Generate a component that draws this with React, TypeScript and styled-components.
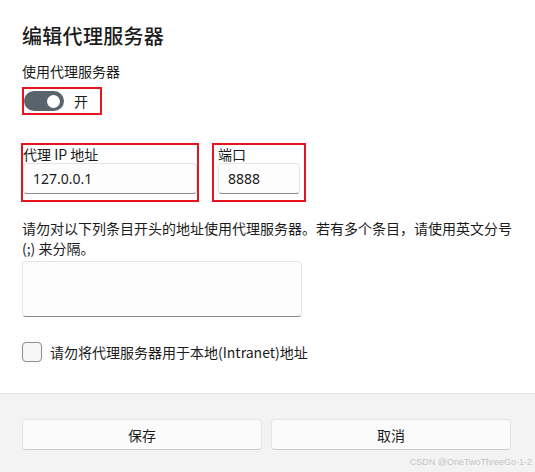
import styled, { createGlobalStyle } from 'styled-components'

const GlobalStyle = createGlobalStyle`
  html, body {
    margin: 0;
    padding: 0;
    background: #ffffff;
  }
  body {
    font-family: "Noto Sans CJK SC", "Noto Sans", sans-serif;
    color: #1b1b1b;
  }
  * {
    box-sizing: border-box;
  }
`

export default function App() {
  return (
    <>
      <GlobalStyle />
      <Dialog>
        <Content>
          <Title>编辑代理服务器</Title>
          <Label>使用代理服务器</Label>
          <ToggleMark>
            <ToggleRow>
              <Switch>
                <Knob />
              </Switch>
              <ToggleText>开</ToggleText>
            </ToggleRow>
          </ToggleMark>

          <FieldRow>
            <Marked>
              <Field width={174}>
                <FieldLabel>代理 IP 地址</FieldLabel>
                <Input defaultValue="127.0.0.1" />
              </Field>
            </Marked>
            <Marked>
              <Field width={90} inset={4}>
                <FieldLabel>端口</FieldLabel>
                <Input defaultValue="8888" />
              </Field>
            </Marked>
          </FieldRow>

          <Description>
            请勿对以下列条目开头的地址使用代理服务器。若有多个条目，请使用英文分号
            <br />
            (;) 来分隔。
          </Description>
          <TextArea />

          <CheckRow>
            <CheckBox />
            <CheckLabel>请勿将代理服务器用于本地(Intranet)地址</CheckLabel>
          </CheckRow>
        </Content>

        <Footer>
          <Buttons>
            <Button>保存</Button>
            <Button>取消</Button>
          </Buttons>
          <Watermark>CSDN @OneTwoThreeGo-1-2</Watermark>
        </Footer>
      </Dialog>
    </>
  )
}

const Dialog = styled.div`
  width: 535px;
  height: 472px;
  display: flex;
  flex-direction: column;
  overflow: hidden;
`

const Content = styled.div`
  flex: 1;
  display: flex;
  flex-direction: column;
  align-items: flex-start;
  padding: 22px 22px 0 22px;
`

const Title = styled.h1`
  margin: 0;
  font-size: 20px;
  line-height: 28px;
  font-weight: 500;
  letter-spacing: 0.3px;
`

const Label = styled.div`
  margin-top: 11px;
  font-size: 14px;
  line-height: 20px;
`

const Marked = styled.div`
  border: 2px solid #e6141f;
  display: inline-flex;
`

const ToggleMark = styled(Marked)`
  margin-top: 6px;
`

const ToggleRow = styled.div`
  display: flex;
  align-items: center;
  gap: 10px;
  height: 24px;
  padding: 0 12px 0 0;
`

const Switch = styled.div`
  width: 40px;
  height: 20px;
  border-radius: 10px;
  background: #58636b;
  display: flex;
  align-items: center;
  justify-content: flex-end;
  padding-right: 4px;
`

const Knob = styled.div`
  width: 13px;
  height: 13px;
  border-radius: 50%;
  background: #ffffff;
`

const ToggleText = styled.span`
  font-size: 14px;
  line-height: 20px;
`

const FieldRow = styled.div`
  margin-top: 28px;
  display: flex;
  align-items: flex-start;
  gap: 13px;
  margin-left: -1px;
`

const Field = styled.div<{ width: number; inset?: number }>`
  width: ${({ width }) => width}px;
  display: flex;
  flex-direction: column;
  padding: 0 ${({ inset }) => inset ?? 0}px 6px;
`

const FieldLabel = styled.div`
  font-size: 14px;
  line-height: 18px;
`

const Input = styled.input`
  width: 100%;
  height: 31px;
  border: 1px solid #e5e5e5;
  border-bottom: 1px solid #8a8a8a;
  border-radius: 4px;
  background: #fdfdfd;
  padding: 0 9px;
  font-family: "Noto Sans", "Noto Sans CJK SC", sans-serif;
  font-size: 14px;
  color: #1b1b1b;
  outline: none;
`

const Description = styled.p`
  margin: 16px 0 0;
  font-size: 14px;
  line-height: 20px;
  white-space: nowrap;
`

const TextArea = styled.textarea`
  margin-top: 3px;
  width: 280px;
  height: 56px;
  border: 1px solid #e5e5e5;
  border-bottom: 1px solid #8a8a8a;
  border-radius: 4px;
  background: #fdfdfd;
  resize: none;
  outline: none;
`

const CheckRow = styled.label`
  margin-top: 25px;
  display: flex;
  align-items: center;
  gap: 8px;
`

const CheckBox = styled.span`
  width: 20px;
  height: 20px;
  border: 1px solid #8d8d8d;
  border-radius: 4px;
  background: #f6f6f6;
`

const CheckLabel = styled.span`
  font-size: 14px;
  line-height: 20px;
`

const Footer = styled.div`
  height: 79px;
  background: #f3f3f3;
  border-top: 1px solid #e5e5e5;
  padding: 25px 24px 0 22px;
  display: flex;
  flex-direction: column;
`

const Buttons = styled.div`
  display: grid;
  grid-template-columns: 1fr 1fr;
  gap: 9px;
`

const Button = styled.button`
  height: 31px;
  border: 1px solid #e5e5e5;
  border-bottom-color: #cccccc;
  border-radius: 4px;
  background: #fbfbfb;
  font-family: "Noto Sans CJK SC", sans-serif;
  font-size: 14px;
  color: #1b1b1b;
`

const Watermark = styled.div`
  align-self: flex-end;
  margin-top: 7px;
  margin-right: -21px;
  font-family: "Liberation Sans", Arial, sans-serif;
  font-size: 9px;
  color: #c4c4c4;
`
